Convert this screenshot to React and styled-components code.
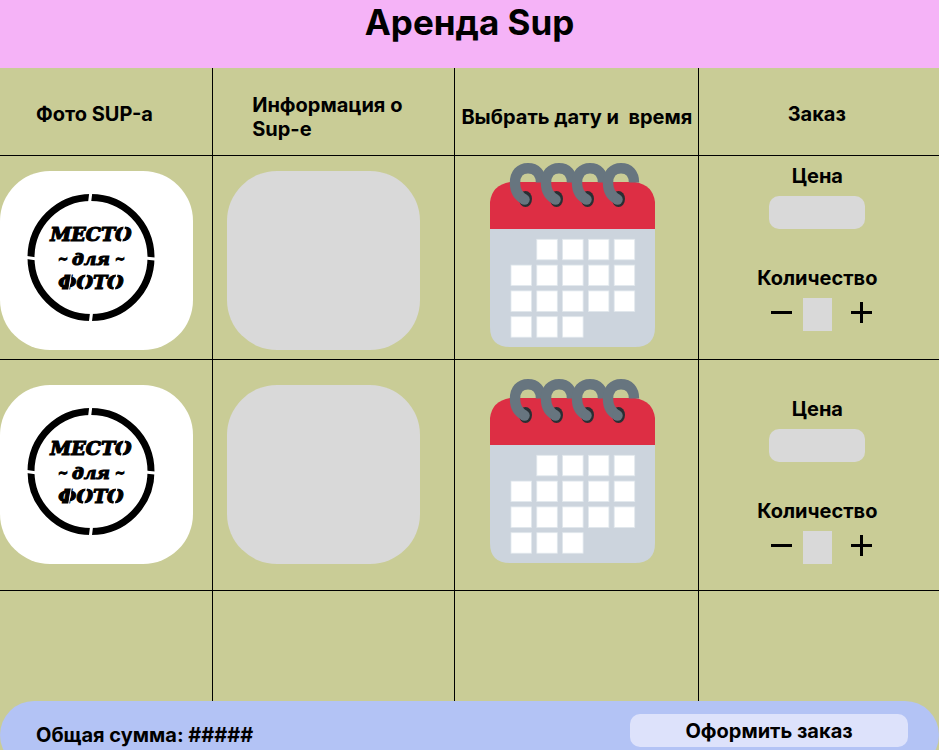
import React from "react";
import styled, { createGlobalStyle } from "styled-components";

const GlobalStyle = createGlobalStyle`
  *, *::before, *::after { box-sizing: border-box; }
  body {
    margin: 0;
    background: #c9cc96;
    color: #000;
    font-family: Inter, "Liberation Sans", sans-serif;
    font-size: 20px;
    font-weight: 700;
    line-height: 24px;
  }
`;

const Page = styled.div`
  height: 100vh;
  overflow-y: auto;
  scrollbar-width: none;
`;

const TopBar = styled.header`
  min-height: 68px;
  background: #f5b3f7;
  text-align: center;
`;

const Title = styled.h1`
  margin: 0;
  font-size: 35px;
  font-weight: 700;
  line-height: 44px;
`;

const Catalog = styled.table`
  width: 100%;
  table-layout: fixed;
  border-collapse: separate;
  border-spacing: 0;
`;

const Column = styled.col`
  width: ${(p) => p.$share || "auto"};
`;

const HeadCell = styled.th`
  height: 88px;
  padding: ${(p) => (p.$low ? 11 : 5)}px ${(p) => p.$after || 0}px 0 ${(p) => p.$indent || 0}px;
  border-right: 1px solid #000;
  border-bottom: 1px solid #000;
  font-weight: 700;
  text-align: ${(p) => p.$align || "left"};
  white-space: pre-line;

  &:last-child { border-right: 0; }
`;

const Cell = styled.td`
  height: ${(p) => p.$height}px;
  padding: ${(p) => p.$top || 0}px 0 0 ${(p) => p.$indent || 0}px;
  border-right: 1px solid #000;
  border-bottom: ${(p) => (p.$open ? "0" : "1px solid #000")};
  vertical-align: top;

  &:last-child { border-right: 0; }
`;

const Tile = styled.div`
  width: 193px;
  max-width: 100%;
  height: 179px;
  border-radius: 50px;
  background: ${(p) => p.$fill};
  overflow: hidden;
`;

const Drawing = styled.svg`
  display: block;
`;

const StampText = styled.text`
  font-family: "DejaVu Serif", serif;
  font-size: ${(p) => p.$size || 19}px;
  font-weight: 700;
  font-style: italic;
  text-anchor: middle;
  stroke: #000;
  stroke-width: 1.2px;
`;

const BareButton = styled.button`
  display: block;
  padding: 0;
  border: 0;
  background: none;
  cursor: pointer;
`;

const OrderForm = styled.div`
  display: flex;
  flex-direction: column;
  align-items: center;
  gap: 8px;
  padding-right: 3px;
`;

const Caption = styled.label`
  display: block;
`;

const PriceField = styled.input`
  width: 96px;
  height: 33px;
  margin-bottom: 29px;
  border: 0;
  border-radius: 10px;
  background: #d9d9d9;
  font: inherit;
  text-align: center;
`;

const Stepper = styled.div`
  display: flex;
`;

const StepButton = styled.button`
  display: flex;
  align-items: center;
  justify-content: flex-end;
  width: 40px;
  height: 29px;
  padding: 0 ${(p) => p.$after || 0}px 0 0;
  border: 0;
  background: none;
  color: #000;
  cursor: pointer;
`;

const CountField = styled.input`
  width: 29px;
  height: 33px;
  padding: 0;
  border: 0;
  background: #d9d9d9;
  font: inherit;
  text-align: center;
`;

const Footer = styled.footer`
  display: flex;
  justify-content: space-between;
  align-items: flex-start;
  min-height: 68px;
  padding: 13px 31px 0 36px;
  border-radius: 34px;
  background: #b3c3f5;
`;

const Total = styled.p`
  margin: 0;
  padding-top: 9px;
`;

const SubmitButton = styled.button`
  width: 278px;
  height: 33px;
  padding: 0;
  border: 0;
  border-radius: 10px;
  background: #dde2fb;
  color: #000;
  font: inherit;
  cursor: pointer;
`;

function PhotoStamp() {
  return (
    <Drawing width="193" height="179" viewBox="0 0 193 179" role="img" aria-label="Место для фото">
      <circle cx="91" cy="86.5" r="60" fill="none" stroke="#000" strokeWidth="7" />
      <g stroke="#fff" strokeWidth="3">
        <path d="M91 20 L89.5 32 M91.5 142 L90 154" />
        <path d="M25 86.3 L37 88 M145 87 L157 88.3" />
      </g>
      <StampText x="91" y="70">МЕСТО</StampText>
      <StampText x="63" y="92" $size={12}>~</StampText>
      <StampText x="91" y="94" $size={17}>для</StampText>
      <StampText x="120" y="92" $size={12}>~</StampText>
      <StampText x="91" y="118">ФОТО</StampText>
      <g stroke="#fff" strokeWidth="1.4">
        <path d="M124.500 54 L121.500 72" />
        <path d="M86.500 102 L83.500 120 M117 102 L114 120" />
      </g>
      <path d="M71.500 102 L68.500 120" stroke="#fff" strokeWidth="1" />
    </Drawing>
  );
}

const RINGS = [20, 51, 82, 113];
const DAYS = [[1, 2, 3, 4], [0, 1, 2, 3, 4], [0, 1, 2, 3, 4], [0, 1, 2]];

function CalendarIcon() {
  return (
    <Drawing width="165" height="184" viewBox="0 0 165 184" aria-hidden="true">
      <path d="M0 62 H165 V164 Q165 184 145 184 H20 Q0 184 0 164 Z" fill="#ccd4dd" />
      <path d="M0 66 V39 Q2 22 20 19 H145 Q163 22 165 39 V66 Z" fill="#dd2e44" />
      {DAYS.map((week, row) =>
        week.map((day) => (
          <rect
            key={`${row}-${day}`}
            x={21 + day * 25.8}
            y={76.3 + row * 25.8}
            width="20.5"
            height="20.5"
            fill="#fff"
            stroke="#e1e8ed"
            strokeWidth="0.8"
          />
        ))
      )}
      {RINGS.map((x) => (
        <ellipse key={x} cx={x + 15.5} cy="36" rx="6.5" ry="8" fill="#292f33" />
      ))}
      {RINGS.map((x) => (
        <g key={x} fill="none" stroke="#67757f" strokeWidth="10.4">
          <path
            d={`M${x + 14.5} 36.5 C${x + 8} 33 ${x + 5} 27 ${x + 5} 20 C${x + 5} 10.5 ${x + 10} 5.2 ${x + 18} 5.2 C${x + 26} 5.2 ${x + 31} 10.5 ${x + 31} 19.5`}
          />
          <circle cx={x + 14.5} cy="36.5" r="5.2" fill="#67757f" stroke="none" />
        </g>
      ))}
    </Drawing>
  );
}

function MinusIcon() {
  return (
    <Drawing width="21" height="21" viewBox="0 0 21 21" aria-hidden="true">
      <path d="M0 9 H21 V12 H0 Z" fill="currentColor" />
    </Drawing>
  );
}

function PlusIcon() {
  return (
    <Drawing width="21" height="21" viewBox="0 0 21 21" aria-hidden="true">
      <path d="M0 9 H9 V0 H12 V9 H21 V12 H12 V21 H9 V12 H0 Z" fill="currentColor" />
    </Drawing>
  );
}

function Order({ id }) {
  const [count, setCount] = React.useState("");
  const step = (delta) => setCount((value) => Math.max(0, Number(value) + delta));
  return (
    <OrderForm>
      <Caption htmlFor={`price-${id}`}>Цена</Caption>
      <PriceField id={`price-${id}`} readOnly />
      <Caption htmlFor={`count-${id}`}>Количество</Caption>
      <Stepper>
        <StepButton type="button" aria-label="Меньше" $after={11} onClick={() => step(-1)}>
          <MinusIcon />
        </StepButton>
        <CountField
          id={`count-${id}`}
          inputMode="numeric"
          value={count}
          onChange={(e) => setCount(e.target.value.replace(/\D/g, ""))}
        />
        <StepButton type="button" aria-label="Больше" onClick={() => step(1)}>
          <PlusIcon />
        </StepButton>
      </Stepper>
    </OrderForm>
  );
}

const ROWS = [
  { id: 1, height: 204, tileTop: 15, calendarTop: 7, orderTop: 8 },
  { id: 2, height: 231, tileTop: 25, calendarTop: 19, orderTop: 37 },
];

export default function App() {
  return (
    <>
      <GlobalStyle />
      <Page>
        <TopBar>
          <Title>Аренда Sup</Title>
        </TopBar>
        <Catalog>
          <colgroup>
            <Column $share="22.7%" />
            <Column $share="25.8%" />
            <Column $share="25.9%" />
            <Column />
          </colgroup>
          <thead>
            <tr>
              <HeadCell scope="col" $indent={36}>Фото SUP-а</HeadCell>
              <HeadCell scope="col" $indent={39} $low>{"Информация о\nSup-е"}</HeadCell>
              <HeadCell scope="col" $indent={6} $low>{"Выбрать дату и \u00a0время"}</HeadCell>
              <HeadCell scope="col" $align="center" $after={4}>Заказ</HeadCell>
            </tr>
          </thead>
          <tbody>
            {ROWS.map((row) => (
              <tr key={row.id}>
                <Cell $height={row.height} $top={row.tileTop}>
                  <Tile $fill="#fff"><PhotoStamp /></Tile>
                </Cell>
                <Cell $height={row.height} $top={row.tileTop} $indent={14}>
                  <Tile $fill="#d9d9d9" />
                </Cell>
                <Cell $height={row.height} $top={row.calendarTop} $indent={35}>
                  <BareButton type="button" aria-label="Выбрать дату и время">
                    <CalendarIcon />
                  </BareButton>
                </Cell>
                <Cell $height={row.height} $top={row.orderTop}>
                  <Order id={row.id} />
                </Cell>
              </tr>
            ))}
            <tr>
              <Cell $height={110} $open />
              <Cell $height={110} $open />
              <Cell $height={110} $open />
              <Cell $height={110} $open />
            </tr>
          </tbody>
        </Catalog>
        <Footer>
          <Total>Общая сумма: #####</Total>
          <SubmitButton type="button">Оформить заказ</SubmitButton>
        </Footer>
      </Page>
    </>
  );
}
